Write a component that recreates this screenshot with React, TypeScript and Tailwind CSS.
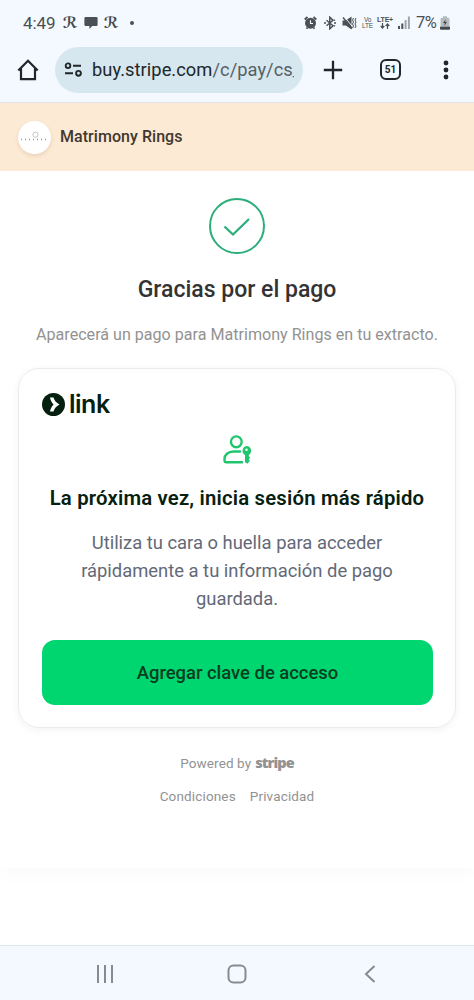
import React from "react";

const ScriptMark = () => (
  <span className="w-[14px] text-center font-['DejaVu_Sans',sans-serif] text-[15.500px] leading-[20px] font-bold text-[#454a4d]">ℛ</span>
);

const StatusBar = () => (
  <div className="flex h-[44px] shrink-0 items-center pt-px text-[#4b5054]">
    <span className="ml-[23px] w-[34px] text-[17px] leading-5 whitespace-nowrap tracking-[-0.1px]">4:49</span>
    <span className="ml-[6px] flex"><ScriptMark /></span>
    <svg className="ml-[7px]" width="14" height="14" viewBox="0 0 14 14" fill="currentColor">
      <path d="M1.7 1h10.6q1.3 0 1.3 1.3v6.4q0 1.3-1.3 1.3H8.2L5.4 13v-3H1.7Q.4 10 .4 8.700V2.300Q.4 1 1.700 1z" />
    </svg>
    <span className="ml-[6px] flex"><ScriptMark /></span>
    <span className="ml-[12px] size-[4px] rounded-full bg-[#4b5054]" />
    <div className="ml-auto flex items-center">
      <svg width="13" height="14" viewBox="0 0 13 14">
        <path d="M.7 3.500 3.500 1M9.500 1l2.800 2.500M2.500 12.800l1-1.300M10.500 12.800l-1-1.300" stroke="currentColor" strokeWidth="1.800" />
        <circle cx="6.500" cy="7.200" r="5.500" fill="currentColor" />
        <path d="M6.500 4.200v3.300h2.500" fill="none" stroke="#f3f9fe" strokeWidth="1.100" />
      </svg>
      <svg className="ml-[6px]" width="14" height="14" viewBox="0 0 14 14" fill="none" stroke="currentColor" strokeWidth="1.500">
        <path d="m3.500 4.200 6.500 5.600-3.200 3V1.200l3.200 3-6.500 5.600" />
        <path d="M1 7h2M11 7h2M11 4.500l1-.7M11 9.500l1 .7" />
      </svg>
      <svg className="ml-[5px]" width="15" height="14" viewBox="0 0 15 14">
        <path d="M.5 4.500h3.300L9.500.5v13L3.800 9.500H.5z" fill="currentColor" />
        <path d="M2 .5 11 11.200" stroke="#f3f9fe" strokeWidth="1" />
        <path d="M1 1.500 10 12.500" stroke="currentColor" strokeWidth="1.500" />
        <path d="m11.500 2-1 2 1 2-1 2 1 2-1 2M14 2l-1 2 1 2-1 2 1 2-1 2" fill="none" stroke="currentColor" strokeWidth="1" />
      </svg>
      <div className="ml-[5px] flex w-[11px] flex-col items-center font-['Liberation_Sans',sans-serif] text-[6.500px] leading-[6px] tracking-[-0.200px]">
        <span>Vo</span><span>LTE</span>
      </div>
      <div className="ml-[4px] flex w-[16px] flex-col items-center">
        <span className="font-['Liberation_Sans',sans-serif] text-[7px] leading-[7px] font-bold tracking-[-0.200px] whitespace-nowrap">LTE+</span>
        <svg width="10" height="6" viewBox="0 0 10 6" fill="none" stroke="currentColor" strokeWidth="1.200">
          <path d="M2.500 0v5M.7 3l1.800 2 1.800-2M7.500 6V1M5.700 3l1.800-2 1.800 2" />
        </svg>
      </div>
      <svg className="ml-[5px]" width="12" height="13" viewBox="0 0 12 13" fill="currentColor">
        <path d="M0 10h2v3H0zM3.300 7.500h2V13h-2z" />
        <path d="M6.600 4h2v9h-2zM9.900.5h2V13h-2z" opacity=".5" />
      </svg>
      <span className="ml-[6px] w-[23px] text-[16.500px] leading-5 tracking-[-0.500px] whitespace-nowrap">7%</span>
      <svg className="mr-[24px] ml-px" width="10" height="14" viewBox="0 0 10 14">
        <path d="M3 .3h4v1.500h1q1.500 0 1.500 1.500V11H.5V3.300Q.5 1.800 2 1.800h1z" fill="#b5babd" />
        <path d="M0 10.700h10v2q0 1-1 1H1q-1 0-1-1z" fill="#43484b" />
        <path d="M5.500 3.500 3 7h1.700l-.3 2.700L7 6H5.300z" fill="#43484b" />
      </svg>
    </div>
  </div>
);

const BrowserBar = () => (
  <div className="flex h-[59px] shrink-0 items-start border-b border-[#dfe3e7] pt-[3px] text-[#202629]">
    <div className="flex h-[46px] w-[55px] shrink-0 items-center pl-[17px]">
      <svg width="22" height="22" viewBox="0 0 22 22" fill="none" stroke="currentColor" strokeWidth="2.200">
        <path d="M1.300 11.500 11 1.700l9.700 9.800M4 9.500v10.700h14V9.500" />
      </svg>
    </div>
    <div className="flex h-[46px] w-[248px] shrink-0 items-center rounded-full bg-[#d7e7ef] pl-[9px]">
      <svg className="shrink-0" width="19" height="16" viewBox="0 0 19 16" fill="none" stroke="currentColor" strokeWidth="1.900">
        <circle cx="4" cy="3.700" r="2.300" /><circle cx="14.500" cy="11.300" r="2.400" />
        <path d="M9 3.700h8M1 11.300h8" />
      </svg>
      <span className="ml-[9px] w-[202px] overflow-hidden text-[18.300px] leading-6 tracking-[0.050px] whitespace-nowrap">buy.stripe.com<span className="text-[#566066]">/c/pay/cs_</span></span>
    </div>
    <svg className="mt-[13px] ml-[20px] shrink-0" width="20" height="20" viewBox="0 0 20 20" stroke="currentColor" strokeWidth="2.300"><path d="M10 .8v18.400M.8 10h18.400" /></svg>
    <div className="mt-[12px] ml-[37px] flex size-[21px] shrink-0 items-center justify-center rounded-[6px] border-2 border-current text-[10px] leading-none font-bold">51</div>
    <svg className="mt-[13px] ml-[41px] shrink-0" width="8" height="20" viewBox="0 0 8 20" fill="currentColor"><circle cx="4" cy="3" r="2.400" /><circle cx="4" cy="10" r="2.400" /><circle cx="4" cy="17" r="2.400" /></svg>
  </div>
);

const MerchantHeader = () => (
  <div className="flex h-[68px] shrink-0 items-center bg-[#fdead4] pl-[18px]">
    <div className="flex size-[33px] items-center justify-center rounded-full bg-white shadow-[0_2px_4px_rgba(80,50,20,0.12)]">
      <svg width="29" height="12" viewBox="0 0 29 12" fill="none">
        <circle cx="15.500" cy="3.700" r="2.600" stroke="#aaa" strokeWidth=".7" />
        <path d="M1 8.500h27" stroke="#999" strokeWidth="1.500" strokeDasharray="1 3" />
      </svg>
    </div>
    <span className="ml-[9px] text-[16px] leading-5 font-medium tracking-[0.050px] text-[#3f382f]">Matrimony Rings</span>
  </div>
);

const LinkCard = () => (
  <section className="mx-[18px] mt-[23px] flex h-[360px] shrink-0 flex-col rounded-[21px] border border-[#ebebeb] px-[23px] pt-[22px] shadow-[0_2px_8px_rgba(0,0,0,0.05)]">
    <div className="flex h-[26px] items-center text-[#06200f]">
      <svg width="23" height="23" viewBox="0 0 23 23">
        <circle cx="11.500" cy="11.500" r="11.500" fill="currentColor" />
        <path d="M8 4.500h3.500c.7 3 2.800 5.200 6 7-3.200 1.800-5.300 4-6 7H8c.5-2.700 1.700-5.100 3.600-7-1.900-1.900-3.100-4.300-3.600-7z" fill="#fff" />
      </svg>
      <span className="ml-[4px] font-['Inter',sans-serif] text-[25px] leading-[26px] font-semibold tracking-[-0.500px]">link</span>
    </div>
    <svg className="mt-[18px] ml-[181px]" width="29" height="29" viewBox="0 0 29 29" fill="none" stroke="#20c66d" strokeWidth="2.400">
      <circle cx="13.300" cy="6.800" r="5.400" />
      <path d="M17 16.500h-6.500C5 16.500 1.500 20 1.500 24v1.500q0 1.800 1.800 1.800H19" strokeLinecap="round" />
      <path fillRule="evenodd" d="M23.500 11a4.800 4.800 0 0 1 2.300 8.900v1.300l1.300 1.600-1.300 1.700 1 1.500-2.500 2.700-2.300-1.800v-7A4.800 4.800 0 0 1 23.500 11zm0 2.400a1.300 1.300 0 1 0 0 2.600 1.300 1.300 0 0 0 0-2.600z" fill="#20c66d" stroke="none" />
    </svg>
    <h2 className="mt-[22px] text-center text-[20.300px] leading-6 font-semibold tracking-[0.200px] whitespace-nowrap text-[#06200f]">La próxima vez, inicia sesión más rápido</h2>
    <p className="mt-[19px] text-center text-[18.400px] leading-[28px] text-[#636977]">Utiliza tu cara o huella para acceder<br />rápidamente a tu información de pago<br />guardada.</p>
    <button className="mt-[27px] h-[65px] w-[391px] shrink-0 rounded-[13px] bg-[#00d66f] text-[18.400px] font-medium text-[#073d20]">Agregar clave de acceso</button>
  </section>
);

const Footer = () => (
  <footer className="mt-[25px] flex flex-col items-center text-[13.500px] leading-5 text-[#929292]">
    <div className="flex items-center">
      <span className="tracking-[0.100px]">Powered by</span>
      <span className="ml-[4px] font-['Open_Sans',sans-serif] text-[14.500px] leading-5 font-extrabold tracking-[-0.900px]">stripe</span>
    </div>
    <div className="mt-[13px] flex gap-[14px] tracking-[0.150px]"><span>Condiciones</span><span>Privacidad</span></div>
  </footer>
);

const NavigationBar = () => (
  <nav className="flex h-[55px] shrink-0 items-center border-t border-[#dfe6eb] bg-[#f3f9fe] pt-[2px]">
    <svg className="ml-[96px]" width="18" height="18" viewBox="0 0 18 18" stroke="#858b8f" strokeWidth="2"><path d="M2 0v18M9 0v18M16 0v18" /></svg>
    <svg className="ml-[113px]" width="20" height="20" viewBox="0 0 20 20" fill="none" stroke="#858b8f" strokeWidth="2"><rect x="1.500" y="1.500" width="17" height="17" rx="5" /></svg>
    <svg className="ml-[117px]" width="12" height="18" viewBox="0 0 12 18" fill="none" stroke="#858b8f" strokeWidth="2"><path d="M10.500 1 2 9l8.500 8" /></svg>
  </nav>
);

export default function App() {
  return (
    <div className="flex h-[1000px] w-[474px] flex-col overflow-hidden bg-white font-['Roboto',sans-serif]">
      <div className="shrink-0 bg-[#f3f9fe]"><StatusBar /><BrowserBar /></div>
      <main className="flex h-[765px] shrink-0 flex-col shadow-[0_8px_18px_-2px_rgba(0,0,0,0.025)]">
        <MerchantHeader />
        <svg className="mt-[27px] shrink-0 self-center" width="56" height="56" viewBox="0 0 56 56" fill="none" stroke="#2cae7b" strokeWidth="2">
          <circle cx="28" cy="28" r="27" /><path d="m15.500 28.500 8.500 8 16-15.500" strokeWidth="2.300" />
        </svg>
        <h1 className="mt-[22px] text-center text-[23px] leading-7 font-medium text-[#333]">Gracias por el pago</h1>
        <p className="mt-[21px] text-center text-[16.100px] leading-5 whitespace-nowrap text-[#929292]">Aparecerá un pago para Matrimony Rings en tu extracto.</p>
        <LinkCard />
        <Footer />
      </main>
      <div className="flex-1" />
      <NavigationBar />
    </div>
  );
}
